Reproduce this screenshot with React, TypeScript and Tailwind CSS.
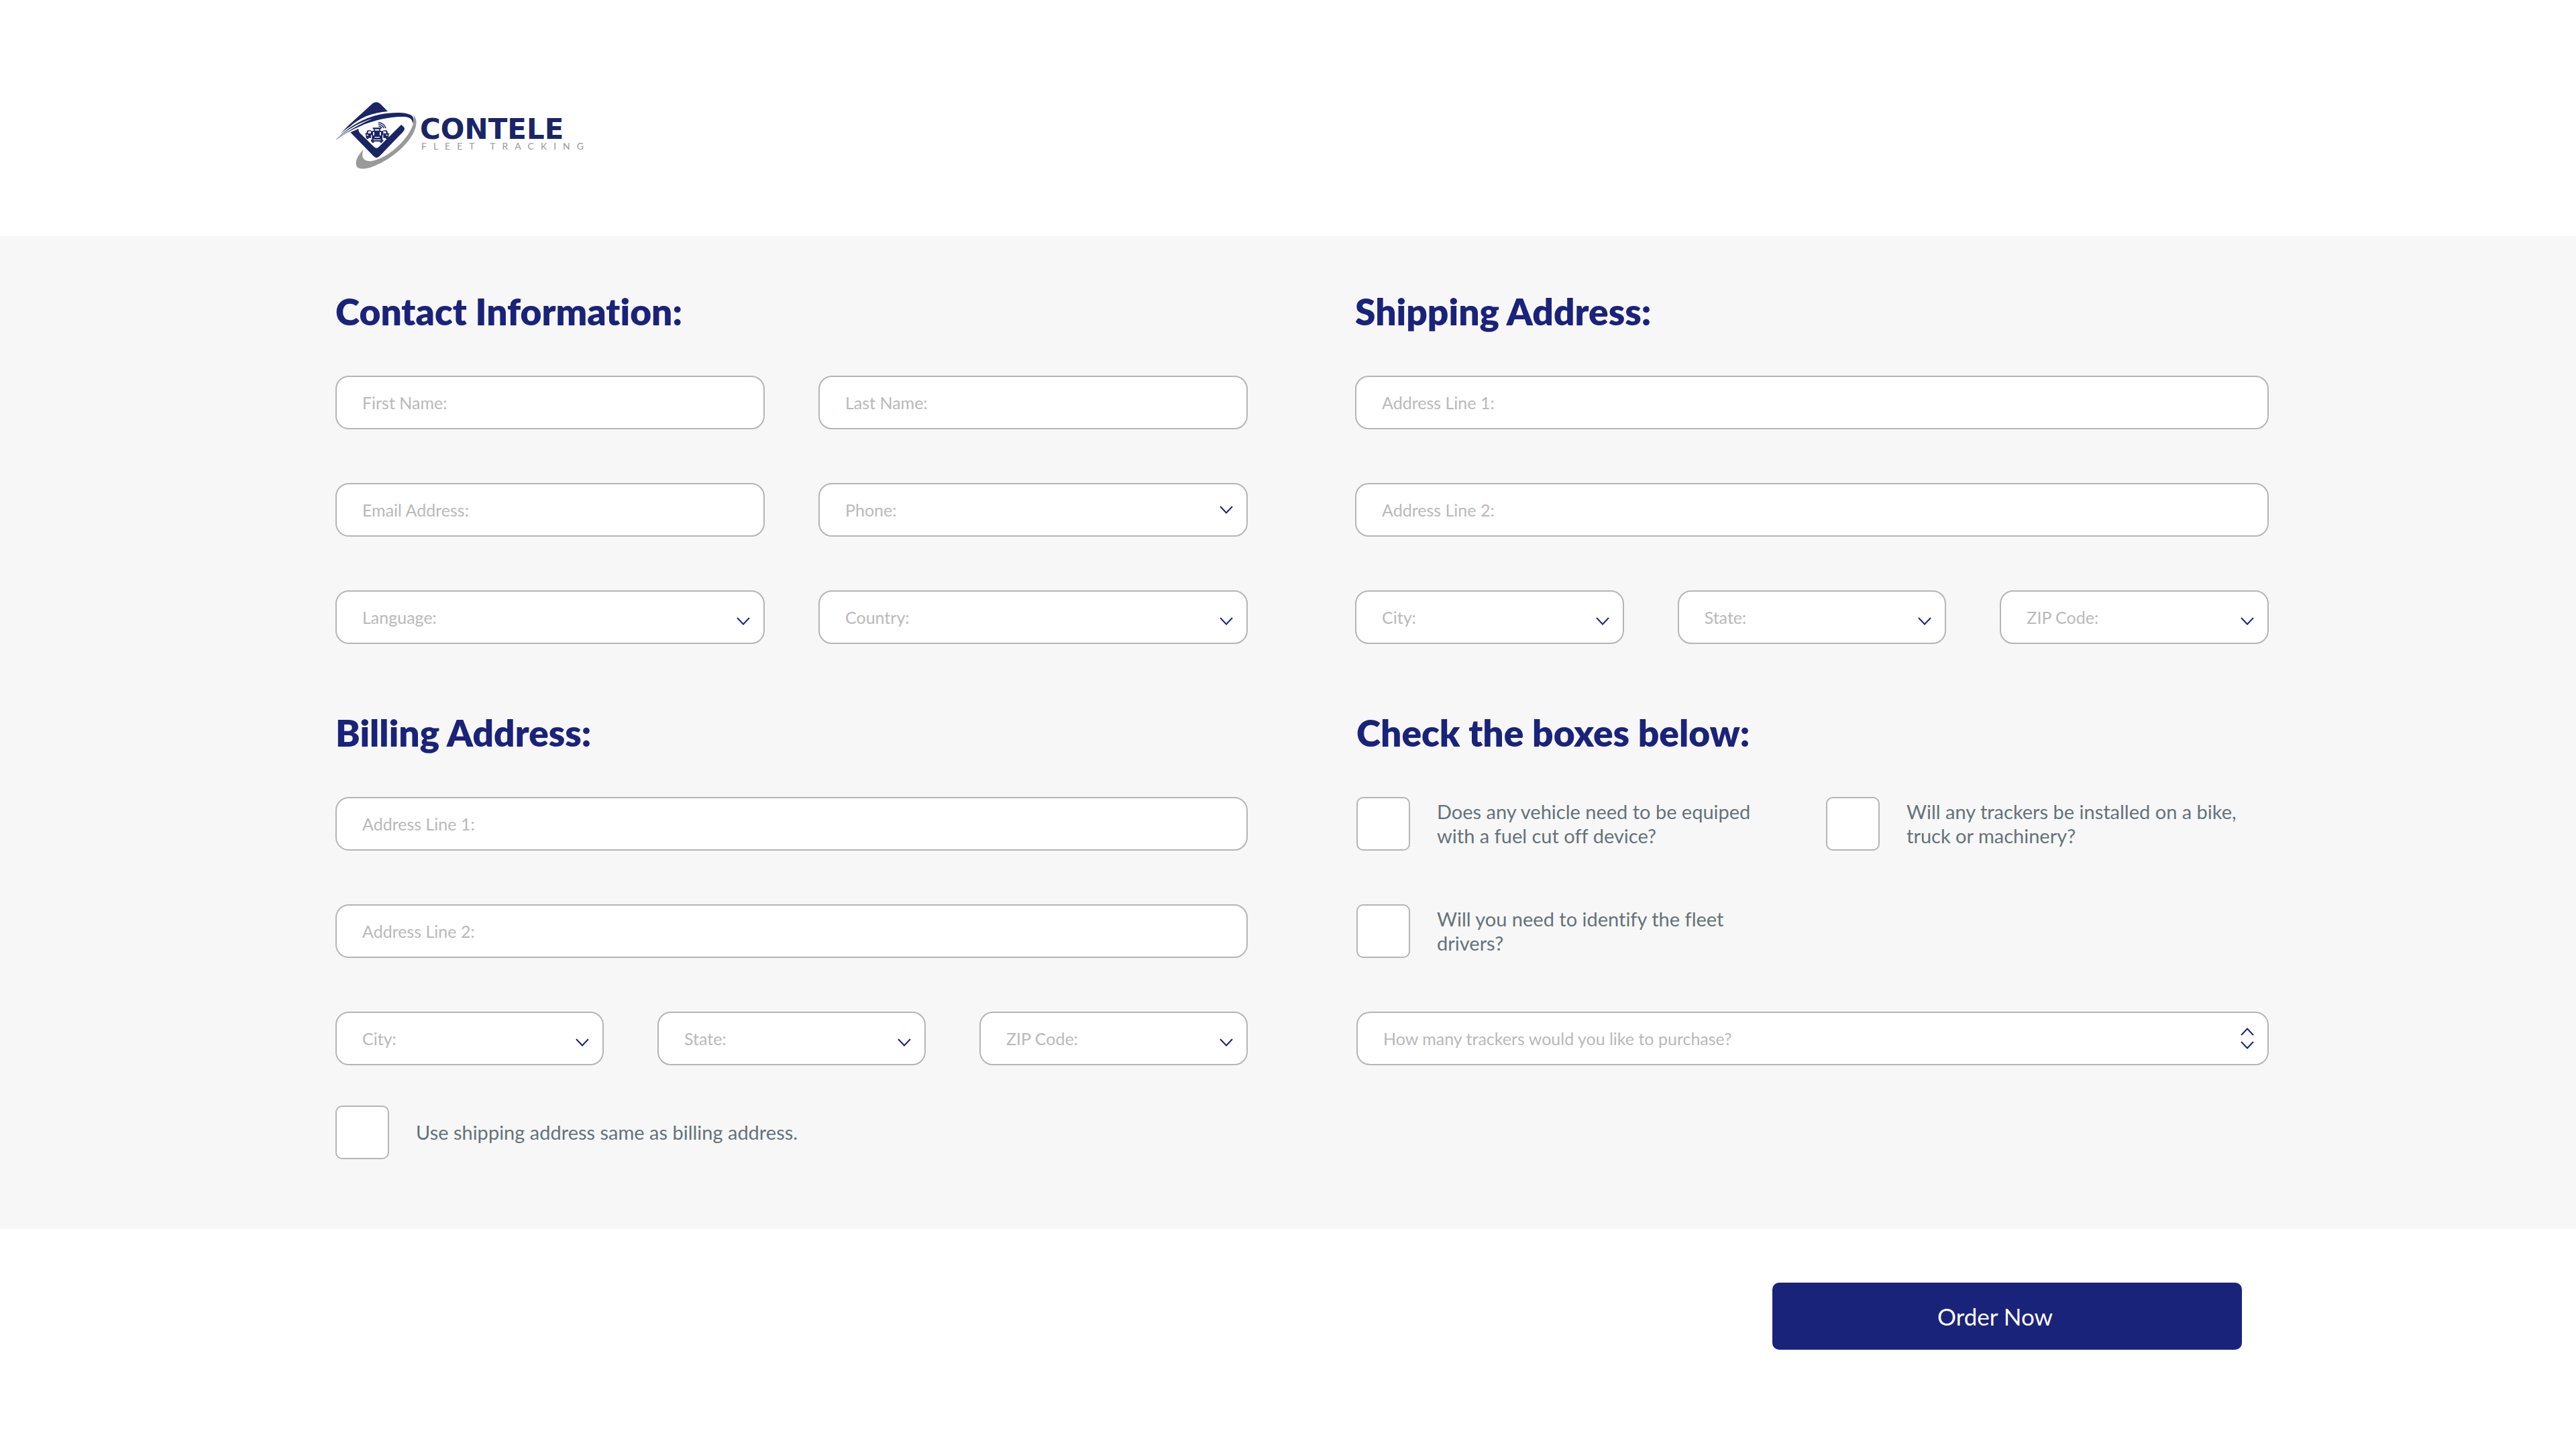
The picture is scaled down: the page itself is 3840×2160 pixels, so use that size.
import type { ReactNode } from 'react';

const fieldBox =
  'h-20 w-full rounded-[20px] border-2 border-[#b5b5b5] bg-white px-[38px] text-[25px] leading-8 outline-none focus:border-[#1a237a]';

function Chevron({ up = false }: { up?: boolean }) {
  return (
    <svg viewBox="0 0 20 12" className="h-3 w-5" fill="none" stroke="#1a237a" strokeWidth="2" aria-hidden="true">
      <path d={up ? 'M1 11 10 1.5 19 11' : 'M1 1 10 10.5 19 1'} />
    </svg>
  );
}

function Logo() {
  return (
    <svg viewBox="0 0 384 104" className="h-26 w-96" role="img" aria-label="Contele Fleet Tracking">
      <g transform="translate(-10 -10) scale(0.33333)">
        <path
          fill="#999999"
          d="M155 250C128 277 117 303 124 321C132 340 163 337 194 326C262 301 342 243 378 176C395 143 398 113 378 94C387 114 377 150 353 184C313 240 252 290 192 300C155 304 143 284 155 250Z"
        />
        <g fill="#1a2566">
          <path d="M196 43Q212 30 229 43L264 78C196 83 137 107 95 146C69 162 48 181 32 207C49 181 72 156 99 131Z" />
          <path d="M32 207C78 154 150 108 228 92C285 81 350 80 371 97C381 106 382 120 376 133C375 116 365 106 345 103C296 98 203 114 137 146C98 163 66 179 32 207Z" />
          <path d="M97 172L133 156Q132 166 138 173L202 236Q213 248 225 236L324 138Q340 148 339 157Q339 163 333 169L226 280Q213 291 202 280Z" />
        </g>
        <path d="M38 200C84 158 140 126 196 111C150 129 91 162 38 200Z" fill="#ffffff" />
        <g fill="none" stroke="#1a2566" strokeWidth="4.5">
          <path d="M222 128Q248 130 256 154" />
          <path d="M222 136Q241 138 247 153" />
          <path d="M223 144Q234 145 238 152" />
        </g>
        <g fill="#1a2566">
          <path d="M197 151H235V157H231V166H244V184H240V205H244V213H238V219H230V213H202V219H194V213H189V205H193V184H189V166H201V157H197Z" />
          <path d="M173 163H189V167H178L175 176H189V197H178V201H169V196H166V181H163V176H168Z" />
          <path d="M244 163H260L265 176H271V181H268V196H265V201H255V197H244V176H258L255 167H244Z" />
        </g>
        <g fill="#ffffff">
          <path d="M206 158H226V164H206Z" />
          <path d="M198 171H204V185H198ZM228 171H234V185H228Z" />
          <path d="M205 192H228V196H205ZM199 204H234V207H199Z" />
          <path d="M170 182H177V187H170ZM256 182H263V187H256Z" />
        </g>
      </g>
      <text x="126" y="57" className="font-['DejaVu_Sans',sans-serif] text-[42px] font-bold" fill="#1a2566">
        CONTELE
      </text>
      <text x="128" y="73" className="font-['Lato',sans-serif] text-[14px] tracking-[10px]" fill="#999999">
        FLEET TRACKING
      </text>
    </svg>
  );
}

function TextField({ label, type = 'text' }: { label: string; type?: string }) {
  return (
    <input
      type={type}
      aria-label={label}
      placeholder={label}
      className={`${fieldBox} text-[#65727a] placeholder:text-[#b9b9b9] placeholder:opacity-100`}
    />
  );
}

function SelectField({ label, centered = false }: { label: string; centered?: boolean }) {
  return (
    <div className="relative">
      <select aria-label={label} defaultValue="" className={`${fieldBox} appearance-none text-[#b9b9b9]`}>
        <option value="">{label}</option>
      </select>
      <span
        className={`pointer-events-none absolute inset-y-0 right-5.5 flex items-center ${centered ? '' : 'pt-3'}`}
      >
        <Chevron />
      </span>
    </div>
  );
}

function CheckField({ children }: { children: ReactNode }) {
  return (
    <label className="flex items-center gap-10 text-[29px] leading-9 text-[#65727a]">
      <input
        type="checkbox"
        className="size-20 shrink-0 appearance-none rounded-[10px] border-2 border-[#b5b5b5] bg-white checked:bg-[#1a237a]"
      />
      <span>{children}</span>
    </label>
  );
}

function Section({ title, className = '', children }: { title: string; className?: string; children: ReactNode }) {
  return (
    <section className={`flex flex-col gap-17 ${className}`}>
      <h2 className="text-[55px] leading-14 font-extrabold text-[#1a237a]">{title}</h2>
      <div className="flex flex-col gap-20">{children}</div>
    </section>
  );
}

function AddressFields() {
  return (
    <>
      <TextField label="Address Line 1:" />
      <TextField label="Address Line 2:" />
      <div className="grid grid-cols-1 gap-20 sm:grid-cols-3">
        <SelectField label="City:" />
        <SelectField label="State:" />
        <SelectField label="ZIP Code:" />
      </div>
    </>
  );
}

export default function App() {
  return (
    <form
      className="min-h-screen bg-white font-['Lato',sans-serif] [font-variant-ligatures:none]"
      onSubmit={(e) => e.preventDefault()}
    >
      <header className="px-10 pt-[150px] pb-[98px] min-[3000px]:pl-125">
        <Logo />
      </header>

      <main className="grid grid-cols-1 gap-x-40 gap-y-26 bg-[#f7f7f7] px-10 pt-21 pb-26 min-[2400px]:grid-cols-[1360fr_1362fr] min-[3000px]:pr-[458px] min-[3000px]:pl-125">
        <Section title="Contact Information:">
          <div className="grid grid-cols-1 gap-20 sm:grid-cols-2">
            <TextField label="First Name:" />
            <TextField label="Last Name:" />
            <TextField label="Email Address:" type="email" />
            <SelectField label="Phone:" centered />
            <SelectField label="Language:" />
            <SelectField label="Country:" />
          </div>
        </Section>

        <Section title="Shipping Address:">
          <AddressFields />
        </Section>

        <div className="flex flex-col gap-15">
          <Section title="Billing Address:">
            <AddressFields />
          </Section>
          <CheckField>Use shipping address same as billing address.</CheckField>
        </div>

        <Section title="Check the boxes below:" className="pl-0.5">
          <div className="grid grid-cols-1 gap-20 sm:grid-cols-[620fr_660fr]">
            <CheckField>
              Does any vehicle need to be equiped
              <br />
              with a fuel cut off device?
            </CheckField>
            <CheckField>
              Will any trackers be installed on a bike,
              <br />
              truck or machinery?
            </CheckField>
            <CheckField>
              Will you need to identify the fleet
              <br />
              drivers?
            </CheckField>
          </div>
          <div className="relative">
            <input
              type="number"
              min={0}
              aria-label="How many trackers would you like to purchase?"
              placeholder="How many trackers would you like to purchase?"
              className={`${fieldBox} [appearance:textfield] text-[#65727a] placeholder:text-[#b9b9b9] placeholder:opacity-100`}
            />
            <div className="absolute inset-y-0 right-5.5 flex flex-col justify-center gap-2">
              <button type="button" aria-label="More trackers">
                <Chevron up />
              </button>
              <button type="button" aria-label="Fewer trackers">
                <Chevron />
              </button>
            </div>
          </div>
        </Section>
      </main>

      <footer className="flex justify-end px-10 pt-20 pb-37 min-[3000px]:pr-[498px]">
        <button
          type="submit"
          className="h-25 w-full max-w-175 rounded-[10px] bg-[#1a237a] pr-9 text-[35px] leading-10 text-white"
        >
          Order Now
        </button>
      </footer>
    </form>
  );
}
